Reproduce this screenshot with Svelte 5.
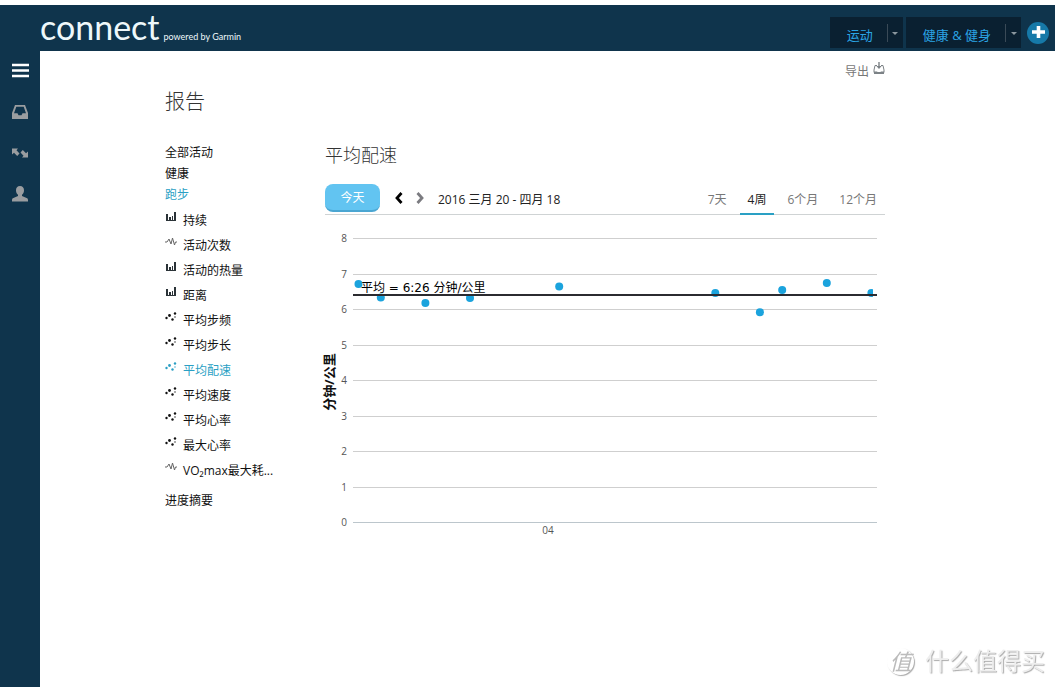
<script lang="ts">
    const categories = [
        { name: "全部活动" },
        { name: "健康" },
        { name: "跑步", active: true },
    ];

    const reports = [
        { name: "持续", icon: "bars" },
        { name: "活动次数", icon: "pulse" },
        { name: "活动的热量", icon: "bars" },
        { name: "距离", icon: "bars" },
        { name: "平均步频", icon: "dots" },
        { name: "平均步长", icon: "dots" },
        { name: "平均配速", icon: "dots" },
        { name: "平均速度", icon: "dots" },
        { name: "平均心率", icon: "dots" },
        { name: "最大心率", icon: "dots" },
        { name: "VO₂max最大耗氧量", short: "VO₂max最大耗...", icon: "pulse" },
    ];

    const ranges = ["7天", "4周", "6个月", "12个月"];

    let report = $state("平均配速");
    let range = $state("4周");

    // day offset in the range, pace in minutes per km
    const paces = [
        [0, 6.73],
        [1, 6.35],
        [3, 6.2],
        [5, 6.34],
        [9, 6.66],
        [16, 6.48],
        [18, 5.94],
        [19, 6.56],
        [21, 6.76],
        [23, 6.48],
    ];

    const ticks = [8, 7, 6, 5, 4, 3, 2, 1, 0];

    const x = (day: number) => 33.5 + day * 22.3;
    const y = (pace: number) => 308 - pace * 35.5;
</script>

<div class="app">
    <header>
        <a class="logo" href="#home">
            <span class="word">connect</span>
            <span class="by">powered by Garmin</span>
        </a>
        <nav class="menu">
            <div class="tab">
                <button class="name">运动</button>
                <button class="more" aria-label="运动菜单"></button>
            </div>
            <div class="tab">
                <button class="name">健康 &amp; 健身</button>
                <button class="more" aria-label="健康菜单"></button>
            </div>
            <button class="add" aria-label="添加">
                <svg width="14" height="14" viewBox="0 0 14 14">
                    <path d="M7.5 0v12M1 6h13" stroke="#fff" stroke-width="3.6" />
                </svg>
            </button>
        </nav>
    </header>

    <div class="body">
        <aside>
            <button aria-label="菜单">
                <svg width="18" height="18" viewBox="0 0 18 18">
                    <path
                        d="M1 3h17M1 8.5h17M1 14h17"
                        stroke="#fff"
                        stroke-width="2.6"
                    />
                </svg>
            </button>
            <button aria-label="收件箱">
                <svg width="18" height="18" viewBox="0 0 18 18">
                    <path
                        fill="#9a9da0"
                        fill-rule="evenodd"
                        d="M4 2h10l3 8v6H1v-6zM5.3 3.7L3 10.2h3.5l1 2h3l1-2H15l-2.3-6.5z"
                    />
                </svg>
            </button>
            <button aria-label="同步">
                <svg width="18" height="18" viewBox="0 0 18 18">
                    <g fill="#9a9da0">
                        <path d="M1 4.5h6L5.5 6.2l3 3.3-2.3 2.5L3 8.800 1 10.5z" />
                        <path d="M17 13.5h-6l1.5-1.700-3-3.300L11.800 6 15 9.200l2-1.700z" />
                    </g>
                </svg>
            </button>
            <button aria-label="个人资料">
                <svg width="18" height="18" viewBox="0 0 18 18">
                    <path
                        fill="#9a9da0"
                        d="M9 1c2.600 0 4 1.700 4 4.200 0 2-.8 3.700-2 4.600v1.300l4.600 1.800c1 .4 1.400 1.200 1.400 2.100v1.500H1V15c0-.9.4-1.700 1.400-2.100L7 11.100V9.800C5.800 8.900 5 7.200 5 5.200 5 2.700 6.400 1 9 1z"
                    />
                </svg>
            </button>
        </aside>

        <main>
            <div class="page">
                <div class="tools">
                    <button class="export">
                        导出
                        <svg width="12" height="14" viewBox="0 0 12 14">
                            <path
                                fill="none"
                                stroke="#7c8286"
                                d="M4 3.5H2L1 8v2.5h10V8l-1-4.5H8"
                            />
                            <path
                                fill="#7c8286"
                                d="M5.3 0h1.400v4h2L6 7 3.300 4h2zM1 9.500h3l1 1h2l1-1h3V12H1z"
                            />
                        </svg>
                    </button>
                </div>
                <h1>报告</h1>

                <div class="columns">
                    <nav class="reports">
                        <ul class="categories">
                            {#each categories as c}
                                <li>
                                    <a href="#category" class:active={c.active}
                                        >{c.name}</a
                                    >
                                </li>
                            {/each}
                        </ul>
                        <ul>
                            {#each reports as r}
                                <li class="report">
                                    <a
                                        href="#report"
                                        title={r.name}
                                        class:active={report === r.name}
                                        onclick={() => (report = r.name)}
                                    >
                                        <svg
                                            width="12"
                                            height="12"
                                            viewBox="0 0 12 12"
                                        >
                                            {#if r.icon === "bars"}
                                                <path
                                                    fill="#2b3338"
                                                    d="M1 2h2v6H1zM4 5h2v3H4zM7 4h1v4H7zM9 0h2v8H9zM1 8h10v1H1z"
                                                />
                                            {:else if r.icon === "pulse"}
                                                <path
                                                    fill="none"
                                                    stroke="#666"
                                                    d="M0 5h2l2-3 2 5 1.500-6 2 7 1-3H12"
                                                />
                                            {:else}
                                                <g fill="currentColor">
                                                    <circle cx="1.5" cy="6" r="1.2" />
                                                    <circle cx="4.5" cy="3.5" r="1.4" />
                                                    <circle cx="7.5" cy="7.5" r="1.2" />
                                                    <circle cx="10" cy="1.5" r="1.2" />
                                                    <circle cx="10" cy="5" r=".7" />
                                                </g>
                                            {/if}
                                        </svg>
                                        <span>{r.short ?? r.name}</span>
                                    </a>
                                </li>
                            {/each}
                        </ul>
                        <a class="summary" href="#summary">进度摘要</a>
                    </nav>

                    <section>
                        <h2>平均配速</h2>
                        <div class="toolbar">
                            <button class="today">今天</button>
                            <button class="arrow" aria-label="上一页">
                                <svg width="10" height="14" viewBox="0 0 10 14">
                                    <path
                                        d="M7.5 2L3 7l4.5 5"
                                        fill="none"
                                        stroke="#000"
                                        stroke-width="2.8"
                                    />
                                </svg>
                            </button>
                            <button class="arrow" aria-label="下一页">
                                <svg width="10" height="14" viewBox="0 0 10 14">
                                    <path
                                        d="M2.5 2L7 7l-4.5 5"
                                        fill="none"
                                        stroke="#7b7b80"
                                        stroke-width="2.8"
                                    />
                                </svg>
                            </button>
                            <span class="dates">2016 三月 20 - 四月 18</span>
                            <div class="ranges">
                                {#each ranges as r}
                                    <button
                                        class:active={range === r}
                                        onclick={() => (range = r)}>{r}</button
                                    >
                                {/each}
                            </div>
                        </div>

                        <svg class="chart" viewBox="0 0 560 330">
                            <clipPath id="plot">
                                <rect x="28" y="0" width="520" height="309" />
                            </clipPath>
                            {#each ticks as t}
                                <line
                                    x1="28"
                                    x2="552"
                                    y1={Math.ceil(y(t)) - 0.5}
                                    y2={Math.ceil(y(t)) - 0.5}
                                    stroke={t === 0 ? "#bcc6cc" : "#cfcfcf"}
                                />
                                <text
                                    class="tick"
                                    x="22"
                                    y={y(t) + 3}
                                    text-anchor="end">{t}</text
                                >
                            {/each}
                            <text class="tick" x="223" y="319" text-anchor="middle"
                                >04</text
                            >
                            <g clip-path="url(#plot)" fill="#1ba3dd">
                                {#each paces as [day, pace]}
                                    <circle cx={x(day)} cy={y(pace)} r="4" />
                                {/each}
                            </g>
                            <path d="M28 80h524" stroke="#2b2b30" stroke-width="2" />
                            <text class="average" x="36" y="77"
                                >平均 = 6:26 分钟/公里</text
                            >
                            <text
                                class="unit"
                                transform="translate(9 167) rotate(-90)"
                                text-anchor="middle">分钟/公里</text
                            >
                        </svg>
                    </section>
                </div>
            </div>
        </main>
    </div>

    <div class="watermark">
        <span class="seal">值</span>
        <span>什么值得买</span>
    </div>
</div>

<style>
    :global(body) {
        margin: 0;
        background: #fff;
    }

    .app {
        display: flex;
        flex-direction: column;
        min-height: 100vh;
        box-sizing: border-box;
        padding-top: 5px;
        font-family: "Open Sans", "Noto Sans CJK SC", sans-serif;
        font-size: 12px;
        line-height: 20px;
        color: #111;
    }

    button {
        margin: 0;
        padding: 0;
        border: 0;
        background: none;
        font: inherit;
        color: inherit;
        cursor: pointer;
    }

    svg {
        display: block;
    }

    a {
        color: inherit;
        text-decoration: none;
    }

    ul {
        list-style: none;
        margin: 0;
        padding: 0;
    }

    header {
        display: flex;
        justify-content: space-between;
        height: 46px;
        background: #0f344c;

        & .logo {
            display: flex;
            align-items: baseline;
            gap: 4px;
            margin-left: 40px;
            color: #eef8fb;
            font-family: Lato, sans-serif;
            line-height: 44px;
        }

        & .word {
            font-size: 34px;
            font-weight: 400;
        }

        & .by {
            font-size: 9px;
        }
    }

    .menu {
        display: flex;
        align-items: center;
        gap: 3px;
        padding: 12px 6px 3px 0;

        & .tab {
            display: flex;
            align-items: center;
            height: 31px;
            background: #0a2031;
            color: #2aa5e6;
            font-size: 13px;
        }

        & .name {
            padding: 5px 14px 0 17px;
            height: 100%;
        }

        & .more {
            display: flex;
            align-items: center;
            justify-content: center;
            width: 16px;
            height: 18px;
            border-left: 1px solid #3a4a57;
        }

        & .more::after {
            content: "";
            margin-top: 2px;
            border: 3px solid transparent;
            border-top: 3px solid #8b979f;
            border-bottom: 0;
        }

        & .add {
            display: flex;
            align-items: center;
            justify-content: center;
            width: 22px;
            height: 22px;
            margin-left: 3px;
            border-radius: 50%;
            background: #1679a8;
        }
    }

    .body {
        display: flex;
        flex: 1;
    }

    aside {
        display: flex;
        flex-direction: column;
        align-items: center;
        gap: 23px;
        width: 40px;
        padding-top: 11px;
        box-sizing: border-box;
        background: #0f344c;
    }

    main {
        flex: 1;
        padding-right: 45px;
    }

    .page {
        max-width: 720px;
        margin: 0 auto;
    }

    .tools {
        display: flex;
        justify-content: flex-end;
        padding-top: 11px;
    }

    .export {
        display: flex;
        gap: 4px;
        color: #777;
    }

    h1,
    h2 {
        margin: 0;
        font-weight: 300;
        color: #333;
    }

    h1 {
        margin-top: 4px;
        font-size: 20px;
        line-height: 32px;
    }

    .columns {
        display: flex;
        margin-top: 24px;
    }

    .reports {
        width: 160px;
        flex: none;

        & .categories {
            margin-bottom: 3px;
        }

        & .categories li {
            line-height: 21px;
            height: 21px;
        }

        & .report a {
            display: flex;
            align-items: flex-start;
            gap: 6px;
            height: 25px;
            line-height: 25px;
        }

        & .report svg {
            margin-top: 4px;
        }

        & .active {
            color: #2b9fc4;
        }

        & .summary {
            display: block;
            margin-top: 8px;
        }
    }

    section {
        flex: 1;
        min-width: 0;
    }

    h2 {
        font-size: 18px;
        line-height: 26px;
    }

    .toolbar {
        display: flex;
        align-items: center;
        height: 32px;
        margin-top: 14px;
        border-bottom: 1px solid #cfd3d4;

        & .today {
            width: 55px;
            height: 28px;
            margin-right: 9px;
            padding-top: 2px;
            border-bottom: 2px solid #4ba6d2;
            border-radius: 8px;
            background: #62c4f1;
            color: #fff;
        }

        & .arrow {
            padding: 0 6px 0 5px;
        }

        & .dates {
            margin-left: 7px;
            padding-top: 4px;
            color: #222;
        }
    }

    .ranges {
        display: flex;
        align-self: stretch;
        gap: 5px;
        margin-left: auto;

        & button {
            height: 33px;
            padding: 5px 8px 0;
            box-sizing: border-box;
            border-bottom: 2px solid transparent;
            color: #777;
        }

        & .active {
            border-color: #2aa0c4;
            color: #222;
        }
    }

    .chart {
        width: 100%;
        overflow: visible;

        & .tick {
            font-size: 10px;
            fill: #555;
        }

        & .average {
            font-family: "DejaVu Sans", "Noto Sans CJK SC", sans-serif;
            font-size: 12px;
            fill: #000;
        }

        & .unit {
            font-size: 13px;
            font-weight: bold;
            fill: #111;
        }
    }

    .watermark {
        position: fixed;
        right: 10px;
        bottom: 10px;
        display: flex;
        align-items: center;
        gap: 11px;
        font-size: 24px;
        line-height: 32px;
        color: #eee;
        text-shadow: 1px 1px 1px #aaa;

        & .seal {
            width: 27px;
            height: 27px;
            border-radius: 50%;
            box-shadow: 1px 1px 1px #aaa;
            color: #bbb;
            font-size: 22px;
            font-style: italic;
            line-height: 27px;
            text-align: center;
            text-shadow: none;
        }
    }
</style>
